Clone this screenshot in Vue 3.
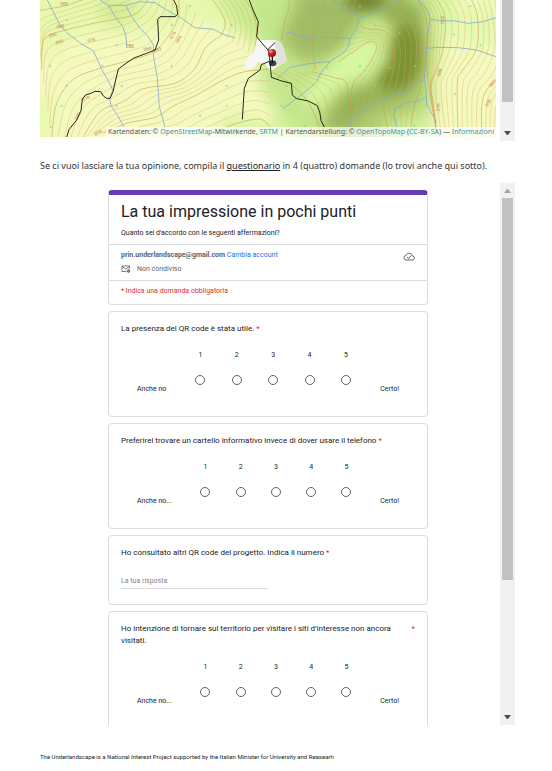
<script setup>
import { ref } from 'vue'

const lerp = (a, b, t) => a.map((p, i) => [p[0] + (b[i][0] - p[0]) * t, p[1] + (b[i][1] - p[1]) * t])

const smooth = (pts) => {
  let d = `M${pts[0][0]} ${pts[0][1]}`
  for (let i = 0; i < pts.length - 1; i++) {
    const a = pts[i - 1] || pts[i]
    const b = pts[i]
    const c = pts[i + 1]
    const e = pts[i + 2] || c
    d += ` C${Math.round(b[0] + (c[0] - a[0]) / 6)} ${Math.round(b[1] + (c[1] - a[1]) / 6)} ${Math.round(c[0] - (e[0] - b[0]) / 6)} ${Math.round(c[1] - (e[1] - b[1]) / 6)} ${Math.round(c[0])} ${Math.round(c[1])}`
  }
  return d
}

// Index contours of each slope; the minor lines are interpolated between neighbours.
const slopes = [
  {
    steps: 5,
    keys: [
      [[-20, 35], [30, 26], [80, 16], [120, 2], [150, -10], [200, -40], [240, -60], [270, -80]],
      [[5, 210], [8, 130], [30, 105], [100, 84], [180, 66], [225, 58], [290, 40], [330, -10]],
      [[35, 411], [50, 310], [100, 238], [190, 202], [290, 175], [355, 145], [412, 60], [416, -10]],
      [[130, 411], [180, 335], [250, 305], [310, 266], [405, 250], [465, 205], [495, 145], [545, 105]],
      [[190, 400], [260, 370], [350, 350], [400, 318], [470, 285], [540, 245], [610, 216], [690, 208]],
      [[400, 440], [450, 425], [500, 405], [550, 385], [590, 370], [630, 360], [665, 358], [690, 380]],
    ],
  },
  {
    steps: 6,
    keys: [
      [[545, 105], [556, 70], [540, 30], [510, -10]],
      [[640, 170], [650, 100], [640, 40], [610, -10]],
    ],
  },
  {
    steps: 5,
    keys: [
      [[690, 212], [750, 250], [800, 300], [830, 360], [845, 415]],
      [[815, 215], [880, 232], [920, 250], [922, 330], [920, 415]],
    ],
  },
  {
    steps: 4,
    keys: [
      [[725, 120], [735, 60], [745, 30], [750, -10]],
      [[825, 210], [818, 110], [838, 45], [862, -10]],
      [[885, 130], [905, 80], [930, 40], [950, -10]],
    ],
  },
  {
    steps: 5,
    keys: [
      [[895, 185], [940, 155], [990, 125], [1010, 145], [975, 210], [940, 250], [930, 330], [930, 415]],
      [[955, 65], [975, 85], [1030, 92], [1060, 130], [1062, 195], [1045, 265], [1030, 310], [1050, 415]],
      [[1070, -10], [1105, 25], [1130, 60], [1145, 110], [1145, 190], [1145, 250], [1120, 330], [1110, 415]],
    ],
  },
  {
    steps: 5,
    keys: [
      [[1130, -10], [1160, 60], [1160, 160], [1165, 250], [1180, 310], [1190, 415]],
      [[1185, -10], [1215, 50], [1210, 140], [1190, 210], [1170, 270], [1195, 415]],
      [[1290, -10], [1312, 50], [1310, 145], [1265, 215], [1252, 250], [1254, 415]],
      [[1380, -10], [1390, 60], [1400, 140], [1385, 215], [1330, 290], [1325, 415]],
      [[1440, -10], [1440, 60], [1440, 140], [1430, 250], [1395, 330], [1390, 415]],
    ],
  },
]

const minor = []
const index = []
slopes.forEach(({ steps, keys }) => {
  keys.forEach((k, i) => {
    index.push(smooth(k))
    if (keys[i + 1]) for (let s = 1; s < steps; s++) minor.push(smooth(lerp(k, keys[i + 1], s / steps)))
  })
})

const streams = [
  'M22 0L60 75L85 102L125 132L160 152L172 178L185 208L205 242L218 270L210 295L212 315L235 350L252 381',
  'M180 0L205 16L257 16L300 5L345 8L380 30L420 52L465 83L520 88L555 105L585 113',
  'M205 16L225 50L248 80L258 108L260 140',
  'M257 16L275 50L300 85L325 110L340 135L340 165L352 235L358 320L375 381',
  'M740 97L760 99L785 113L800 118L830 111L900 113L930 115L950 85L956 55L1005 40L1050 15L1082 0',
  'M930 115L925 140L905 162L870 184L800 192L748 203L710 238',
  'M870 184L845 215L830 245L790 280L760 302L728 328',
  'M878 0L956 50M1135 0L1165 35L1170 58L1165 90L1160 145L1157 175L1153 240L1158 270L1160 310L1175 340L1188 362L1186 381',
  'M1170 58L1210 63L1240 62L1285 70L1330 65L1368 53',
  'M1160 145L1200 142L1255 143L1310 150L1368 170',
  'M870 360L935 357L965 338L1010 305L1050 290L1095 280L1115 255L1152 240',
  'M935 357L930 381M1158 290L1140 302L1100 308L1065 325L1060 345L1070 381',
]

const paths = [
  'M401 0L410 18L413 43L405 50L360 50L353 58L356 120L345 150L320 160L282 174L258 190L235 207L227 240L219 275L210 295L200 295L190 288L182 275L165 274L150 281L137 285L127 297L123 332L110 360L87 389L80 411',
  'M628 0L640 32L655 66L650 110L668 132L684 150M705 128L684 148L690 183L664 194L660 210L625 235L613 265L610 310L607 358M690 183L694 232L725 243L754 250L757 285L770 296L805 303L832 317L840 340L843 362L853 381',
]

const heights = [
  [72, 16, 5, '066'], [62, 84, -10, '086'], [40, 110, -20, '056'], [60, 130, -20, '066'],
  [155, 125, -10, '076'], [270, 143, 0, '086'], [324, 151, -15, '066'], [353, 154, -20, '080'],
  [402, 108, -60, '076'], [420, 120, -60, '086'], [140, 300, -25, '070'], [117, 350, -60, '080'],
  [176, 402, -30, '078'], [1212, 60, -85, '000'], [1203, 218, -75, '066'], [1200, 322, -85, '076'],
  [1361, 253, -55, '066'], [1349, 310, -65, '096'],
]

const trees = [
  [80, 60], [230, 135], [30, 197], [80, 257], [65, 317], [245, 258], [230, 317], [187, 197], [395, 75],
  [450, 18], [575, 75], [395, 197], [560, 257], [560, 317], [480, 347], [32, 380], [740, 75], [793, 18],
  [841, 76], [887, 23], [799, 137], [1006, 76], [1077, 100], [912, 103], [960, 198], [1051, 204], [1125, 197],
  [1006, 257], [740, 257], [862, 203], [992, 317], [912, 281], [1172, 76], [1172, 257], [1157, 317], [1322, 136],
  [960, 18], [1123, 18], [1291, 18], [725, 317], [795, 378], [1123, 378], [1245, 281], [1242, 103],
]

const questions = [
  { id: 'q1', title: 'La presenza del QR code è stata utile.', low: 'Anche no', high: 'Certo!' },
  { id: 'q2', title: 'Preferirei trovare un cartello informativo invece di dover usare il telefono', low: 'Anche no...', high: 'Certo!' },
  { id: 'q3', title: 'Ho consultato altri QR code del progetto. Indica il numero', text: true },
  { id: 'q4', title: "Ho intenzione di tornare sul territorio per visitare i siti d'interesse non ancora visitati.", low: 'Anche no...', high: 'Certo!' },
]

const answers = ref({})
</script>

<template>
  <main class="page">
    <section class="frame map-frame">
      <div class="map">
        <svg class="map-art" viewBox="0 0 1368 411" preserveAspectRatio="xMidYMid slice" aria-hidden="true">
          <defs>
            <filter id="soft" x="-50%" y="-50%" width="200%" height="200%"><feGaussianBlur stdDeviation="24" /></filter>
            <filter id="fine" x="-50%" y="-50%" width="200%" height="200%"><feGaussianBlur stdDeviation="17" /></filter>
            <radialGradient id="pin" cx="0.35" cy="0.3" r="0.8">
              <stop offset="0" stop-color="#f4aaa4" /><stop offset="0.4" stop-color="#c42824" /><stop offset="1" stop-color="#7c0c0c" />
            </radialGradient>
          </defs>
          <rect width="1368" height="411" fill="#f4fabf" />
          <g filter="url(#soft)">
            <path d="M-40 -40H700V130L560 90L470 60L380 90L300 100L160 90L80 130L20 180L-40 160Z" fill="#e6f8ad" />
            <path d="M160 -10L300 -10L280 60L210 90Z" fill="#d2ec94" />
            <path d="M520 -30H700V140L600 100Z" fill="#c9ec90" />
            <path d="M-40 300L60 290L40 450H-40Z" fill="#e8f9ae" />
            <path d="M640 -40H1180L1185 300L1160 450H660L720 350L660 250Z" fill="#c4e68b" />
            <path d="M560 340L760 380L780 450H500Z" fill="#dcf5a2" />
            <path d="M860 450L850 340L960 270L1150 240L1160 320L1080 450Z" fill="#afcf72" />
            <path d="M1040 370L1160 330L1180 450H1000Z" fill="#d0ee98" />
            <path d="M1160 -30H1250L1200 190L1165 280Z" fill="#d4f49c" />
            <path d="M1230 30L1400 10V140L1250 130Z" fill="#e4f9af" />
          </g>
          <g filter="url(#soft)">
            <path d="M780 -30H1060L960 70L900 150L800 190L720 130Z" fill="#9fbd65" />
            <path d="M1060 -30L1150 20L1160 130L1150 240L1080 300L1000 320L900 400L860 380L900 290L1020 240L1060 150L1050 80L1000 50Z" fill="#94b152" />
          </g>
          <g filter="url(#fine)">
            <ellipse cx="975" cy="2" rx="62" ry="30" fill="#728630" />
            <path d="M1070 90L1115 70L1140 130L1140 210L1100 265L1030 270L1010 240L1050 200Z" fill="#7a9332" />
            <ellipse cx="1010" cy="90" rx="42" ry="28" fill="#c6e588" />
            <path d="M905 165L960 115L1010 120L1015 165L980 215L900 250L850 300L800 320L790 280L850 220Z" fill="#d8f7a2" />
          </g>
          <g class="minor"><path v-for="(d, i) in minor" :key="i" :d="d" /></g>
          <g class="index"><path v-for="(d, i) in index" :key="i" :d="d" /></g>
          <g class="trees">
            <path v-for="(t, i) in trees" :key="i" :d="`M${t[0] - 4} ${t[1] + 3}l4 -8l4 8z`" />
          </g>
          <g class="streams"><path v-for="(d, i) in streams" :key="i" :d="d" /></g>
          <g class="heights">
            <text v-for="(h, i) in heights" :key="i" :transform="`translate(${h[0]} ${h[1]}) rotate(${h[2]})`">{{ h[3] }}</text>
          </g>
          <path d="M612 208L622 172L640 160L651 120L708 120L725 130L741 184L700 206L694 216L675 192L655 187L640 205Z" fill="#f6f6f4" />
          <path d="M705 120L718 124L732 145L741 184L708 200Z" fill="#dfe1dd" />
          <g class="paths"><path v-for="(d, i) in paths" :key="i" :d="d" /></g>
          <ellipse cx="698" cy="190" rx="11" ry="9" fill="#111" opacity="0.8" />
          <path d="M697 160V190" stroke="#111" stroke-width="4" />
          <circle cx="696" cy="159" r="12" fill="url(#pin)" />
        </svg>
        <p class="credits">
          Kartendaten: © <a href="#">OpenStreetMap</a>-Mitwirkende, <a href="#">SRTM</a> | Kartendarstellung: ©
          <a href="#">OpenTopoMap</a> (<a href="#">CC-BY-SA</a>) — <a href="#">Informazioni</a>
        </p>
      </div>
      <div class="scrollbar" aria-hidden="true">
        <div class="thumb map-thumb"></div>
        <svg class="arrow" viewBox="0 0 15 15"><path d="M4 5h7l-3 4h-1z" fill="#505050" /></svg>
      </div>
    </section>

    <p class="intro">
      Se ci vuoi lasciare la tua opinione, compila il <a href="#">questionario</a> in 4 (quattro) domande (lo trovi anche qui sotto).
    </p>

    <section class="frame form-frame">
      <form class="form" @submit.prevent>
        <header class="card head">
          <div class="head-block title-block">
            <h1>La tua impressione in pochi punti</h1>
            <p>Quanto sei d'accordo con le seguenti affermazioni?</p>
          </div>
          <div class="head-block account">
            <div class="account-text">
              <p><strong>prin.underlandscape@gmail.com</strong> <a href="#">Cambia account</a></p>
              <p class="shared">
                <svg class="mail" viewBox="0 0 20 16" fill="none" stroke="#5f6368" stroke-width="1.7">
                  <path d="M10.500 13H2V2H17V7.500M2 3L9.500 8L17 3" />
                  <circle cx="15" cy="12" r="2.600" /><path d="M15 8V16M11.500 10L18.500 14M18.500 10L11.500 14" stroke-width="1" />
                </svg>
                Non condiviso
              </p>
            </div>
            <svg class="cloud" viewBox="0 0 24 18" fill="none" stroke="#5f6368" stroke-width="2">
              <path d="M6.500 16H18.500A4 4 0 0 0 19 8A7 7 0 0 0 5.800 6.500A4.800 4.800 0 0 0 6.500 16Z" /><path d="M8 10L11 13L16 7.500" />
            </svg>
          </div>
          <p class="head-block required">* Indica una domanda obbligatoria</p>
        </header>

        <fieldset v-for="q in questions" :key="q.id" class="card question" :aria-labelledby="q.id">
          <div class="q-title">
            <label v-if="q.text" :id="q.id" :for="q.id + '-in'">{{ q.title }} <span class="star">*</span></label>
            <template v-else-if="q.id === 'q4'">
              <span :id="q.id" class="q-long">{{ q.title }}</span><span class="star">*</span>
            </template>
            <span v-else :id="q.id">{{ q.title }} <span class="star">*</span></span>
          </div>
          <input v-if="q.text" :id="q.id + '-in'" v-model="answers[q.id]" class="answer" type="text" placeholder="La tua risposta" />
          <div v-else class="scale">
            <span class="end">{{ q.low }}</span>
            <label v-for="n in 5" :key="n" class="choice">
              <span>{{ n }}</span>
              <input v-model="answers[q.id]" type="radio" :name="q.id" :value="n" />
            </label>
            <span class="end">{{ q.high }}</span>
          </div>
        </fieldset>
      </form>
      <div class="scrollbar" aria-hidden="true">
        <svg class="arrow" viewBox="0 0 15 15"><path d="M4 10h7l-3 -4h-1z" fill="#a3a3a3" /></svg>
        <div class="thumb form-thumb"></div>
        <svg class="arrow" viewBox="0 0 15 15"><path d="M4 5h7l-3 4h-1z" fill="#505050" /></svg>
      </div>
    </section>

    <footer>The Underlandscape is a National Interest Project supported by the Italian Minister for University and Reasearh</footer>
  </main>
</template>

<style>
body {
  margin: 0;
  background: #fff;
}
</style>

<style scoped>
* {
  box-sizing: border-box;
}
p,
h1 {
  margin: 0;
}
.page {
  padding: 0 37px 0 40px;
  font-family: Roboto, sans-serif;
  color: #202124;
}
.frame {
  display: flex;
  overflow: hidden;
}
.map-frame {
  height: 141px;
}
.map {
  display: grid;
  flex: 1;
  height: 137px;
  margin-right: 4px;
  overflow: hidden;
}
.map-art {
  grid-area: 1 / 1;
  width: 100%;
  height: 137px;
}
.minor,
.index,
.streams,
.paths {
  fill: none;
}
.minor {
  stroke: #e0a468;
  stroke-width: 2;
  opacity: 0.55;
}
.index {
  stroke: #d49a50;
  stroke-width: 3;
  opacity: 0.6;
}
.streams {
  stroke: #86a9cf;
  stroke-width: 3;
  opacity: 0.8;
}
.paths {
  stroke: #26261c;
  stroke-width: 3;
}
.trees {
  fill: #8fce86;
  opacity: 0.7;
}
.heights {
  fill: #bd7c50;
  font: 14px "Noto Sans", sans-serif;
  text-anchor: middle;
}
.credits {
  grid-area: 1 / 1;
  place-self: end;
  padding: 0 2px;
  background: rgba(255, 255, 255, 0.7);
  color: #555;
  font: 7px/10px "Noto Sans", sans-serif;
  white-space: nowrap;
  z-index: 1;
}
.credits a {
  color: #2e97bd;
  text-decoration: none;
}
.scrollbar {
  display: flex;
  flex-direction: column;
  width: 15px;
  background: #f1f1f1;
}
.arrow {
  width: 15px;
  height: 15px;
  margin-top: auto;
}
.arrow:first-child {
  margin-top: 0;
}
.thumb {
  margin: 0 2px;
  background: #c1c1c1;
}
.map-thumb {
  height: 102px;
}
.form-thumb {
  height: 382px;
}
.intro {
  padding: 18px 0 10px;
  font: 9px/14px "Noto Sans", sans-serif;
  color: #333;
}
.intro a {
  color: #222;
}
.form-frame {
  height: 542px;
}
.form {
  display: flex;
  flex: 1;
  flex-direction: column;
  align-items: center;
  gap: 6px;
  padding: 7px 4px 0 0;
  font-size: 7px;
  line-height: 12px;
}
.card {
  flex: none;
  width: 320px;
  max-width: 100%;
  margin: 0;
  border: 1px solid #dadce0;
  border-radius: 4px;
  background: #fff;
}
.head {
  overflow: hidden;
  border-top: 5px solid #673ab7;
}
.head-block {
  padding: 4px 12px;
}
.head-block + .head-block {
  border-top: 1px solid #dadce0;
}
.title-block {
  padding: 5px 12px;
}
.title-block h1 {
  margin-bottom: 3px;
  font-size: 16px;
  font-weight: 400;
  line-height: 24px;
}
.account {
  display: flex;
  justify-content: space-between;
  padding-bottom: 5px;
  color: #5f6368;
}
.account a {
  color: #1a73e8;
  text-decoration: none;
}
.shared {
  display: flex;
  align-items: center;
  gap: 6px;
  margin-top: 2px;
}
.mail {
  width: 10px;
  height: 8px;
}
.cloud {
  width: 12px;
  height: 9px;
  margin-top: 3px;
}
.head .required {
  padding-bottom: 7px;
  color: #d93025;
}
.star {
  color: #d93025;
}
.question {
  padding: 11px 12px 21px;
}
.q-title {
  display: flex;
  justify-content: space-between;
  font-size: 8px;
}
.q-long {
  max-width: 280px;
}
.scale {
  display: flex;
  align-items: flex-end;
  margin-top: 8px;
}
.end {
  padding: 0 16px;
}
.choice {
  display: flex;
  flex: 1;
  flex-direction: column;
  align-items: center;
  gap: 14px;
  padding: 6px 0 10px;
}
.choice input {
  width: 10px;
  height: 10px;
  margin: 0;
  appearance: none;
  border: 1px solid #5f6368;
  border-radius: 50%;
}
.choice input:checked {
  border: 3px solid #673ab7;
}
.answer {
  display: block;
  width: 50%;
  height: 16px;
  margin: 14px 0 -6px;
  padding: 0;
  border: 0;
  border-bottom: 1px solid #dadce0;
  outline: 0;
  background: none;
  color: #202124;
  font: 7px/12px Roboto, sans-serif;
}
.answer::placeholder {
  color: #80868b;
}
footer {
  padding-top: 27px;
  font-size: 6px;
  line-height: 10px;
}
</style>
